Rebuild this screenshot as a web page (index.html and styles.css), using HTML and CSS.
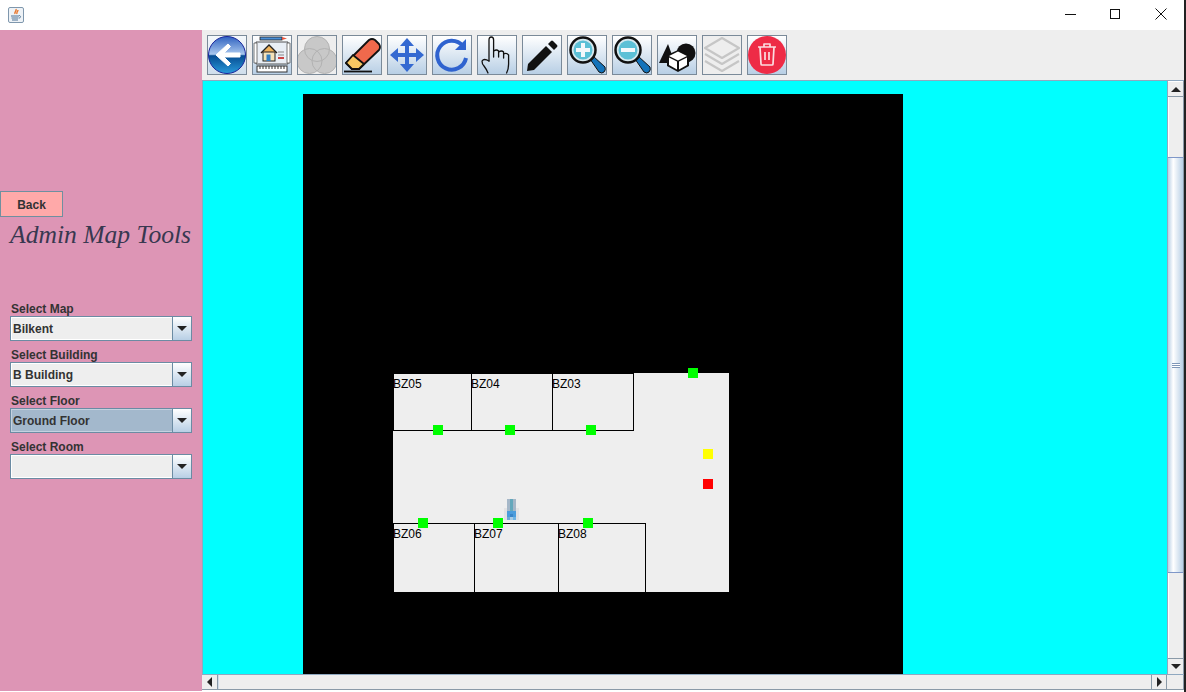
FILE: index.html
```html
<!DOCTYPE html>
<html lang="en">
<head>
<meta charset="utf-8">
<title>Admin Map Tools</title>
<link rel="stylesheet" href="styles.css">
</head>
<body>
<div class="window">
  <header class="titlebar">
    <svg class="app-icon" width="16" height="16" viewBox="0 0 16 16">
      <rect x="0.5" y="0.5" width="15" height="15" rx="1.5" fill="#eef2f6" stroke="#7f97ad"/>
      <path d="M8 2c1 2-2 3-1 5M10 3c0 2-2 2-1 4" fill="none" stroke="#e8772e" stroke-width="1.4"/>
      <path d="M3 9h8M3.5 11h7M4 13h6" stroke="#4f7396" stroke-width="1"/>
      <path d="M11 8.500c2 0 2 2.500 0 2.500" fill="none" stroke="#4f7396"/>
    </svg>
    <div class="winctl">
      <svg width="12" height="12" viewBox="0 0 12 12"><path d="M0 6.500h11" stroke="#111"/></svg>
      <svg width="12" height="12" viewBox="0 0 12 12"><rect x="1.500" y="1.500" width="9" height="9" fill="none" stroke="#111"/></svg>
      <svg width="12" height="12" viewBox="0 0 12 12"><path d="M.5.500l11 11M11.500.500l-11 11" stroke="#111"/></svg>
    </div>
  </header>
  <div class="body">
    <aside class="sidebar">
      <button class="back">Back</button>
      <h1 class="heading">Admin Map Tools</h1>
      <div class="field">
        <label class="label">Select Map</label>
        <div class="combo"><span class="value">Bilkent</span><span class="arrow"></span></div>
      </div>
      <div class="field">
        <label class="label">Select Building</label>
        <div class="combo"><span class="value">B Building</span><span class="arrow"></span></div>
      </div>
      <div class="field">
        <label class="label">Select Floor</label>
        <div class="combo focus"><span class="value">Ground Floor</span><span class="arrow"></span></div>
      </div>
      <div class="field">
        <label class="label">Select Room</label>
        <div class="combo"><span class="value"></span><span class="arrow"></span></div>
      </div>
    </aside>
    <main class="main">
      <nav class="toolbar">
        <div class="tool plain">
          <svg viewBox="0 0 38 38" width="38" height="38">
            <defs>
              <linearGradient id="gb" x1="0" y1="0" x2="0" y2="1">
                <stop offset="0" stop-color="#2f62c0"/><stop offset=".48" stop-color="#a9c7ee"/>
                <stop offset=".52" stop-color="#064c92"/><stop offset="1" stop-color="#2a9adb"/>
              </linearGradient>
            </defs>
            <circle cx="19" cy="19" r="18.500" fill="url(#gb)" stroke="#16229a"/>
            <path d="M20 8 8 19l12 11 2.500-2.500-6.500-6.500h16v-4H16l6.500-6.500z" fill="#fff" stroke="#fff" stroke-linejoin="round"/>
          </svg>
        </div>
        <div class="tool">
          <svg viewBox="0 0 38 38" width="38" height="38">
            <rect x="7" y="1" width="22" height="3" fill="#4a90d9" stroke="#222" stroke-width=".8"/>
            <path d="M29 1l5 1.500-5 1.500z" fill="#e8553f"/>
            <path d="M3 6h32v22H3z" fill="#e9eff6" stroke="#555"/>
            <path d="M1 7h3v20H1zM34 7h3v20h-3z" fill="#fff" stroke="#555" stroke-width=".8"/>
            <path d="M8 17l8-8 8 8" fill="#f1b45c" stroke="#222" stroke-width="1.300"/>
            <rect x="10" y="16" width="12" height="9" fill="#f6e2b8" stroke="#222"/>
            <rect x="13.500" y="18.500" width="4" height="6.500" fill="#2f7fc4"/>
            <path d="M25 16h6M25 19h6" stroke="#888" stroke-width="1.200"/>
            <path d="M25 22h6" stroke="#c44" stroke-width="2"/>
            <rect x="4" y="30" width="30" height="6" fill="#fff" stroke="#333"/>
            <path d="M7 30v3M10 30v3M13 30v3M16 30v3M19 30v3M22 30v3M25 30v3M28 30v3M31 30v3" stroke="#333"/>
          </svg>
        </div>
        <div class="tool off">
          <svg viewBox="0 0 38 38" width="38" height="38">
            <g fill="#c8c8c8">
              <circle cx="19" cy="13" r="12.500"/>
              <circle cx="11.500" cy="25" r="12.500"/>
              <circle cx="26.500" cy="25" r="12.500"/>
            </g>
            <g fill="none" stroke="#b2b2b2">
              <circle cx="19" cy="13" r="12.500"/>
              <circle cx="11.500" cy="25" r="12.500"/>
              <circle cx="26.500" cy="25" r="12.500"/>
            </g>
          </svg>
        </div>
        <div class="tool">
          <svg viewBox="0 0 38 38" width="38" height="38">
            <path d="M3 27 26 4q3-2 6 0l4 4q2 3 0 6L16 33H9z" fill="#f0694c" stroke="#111" stroke-width="1.800" stroke-linejoin="round"/>
            <path d="M3 27l7-8 11 9-5 5H9z" fill="#f8c862" stroke="#111" stroke-width="1.800" stroke-linejoin="round"/>
            <path d="M1 35.500h28" stroke="#111" stroke-width="1.800"/>
          </svg>
        </div>
        <div class="tool">
          <svg viewBox="0 0 38 38" width="38" height="38">
            <path d="M19 2l7 8h-5v7h7v-5l8 7-8 7v-5h-7v7h5l-7 8-7-8h5v-7h-7v5l-8-7 8-7v5h7v-7h-5z" fill="#3469d1"/>
          </svg>
        </div>
        <div class="tool">
          <svg viewBox="0 0 38 38" width="38" height="38">
            <path d="M30 10A14.500 14.500 0 1 0 33 22" fill="none" stroke="#2f63cf" stroke-width="4"/>
            <path d="M33 3v11H22z" fill="#2f63cf"/>
          </svg>
        </div>
        <div class="tool">
          <svg viewBox="0 0 38 38" width="38" height="38">
            <g fill="none" stroke="#111" stroke-width="1.300" stroke-linejoin="round" stroke-linecap="round">
              <path d="M11 25V4q0-3 2.300-3t2.300 3v17"/>
              <path d="M15.600 15q3-2 5 0v6"/>
              <path d="M20.600 16q3-2 5 0v6"/>
              <path d="M25.600 18q3-1.500 5 1v9q0 5-2 9"/>
              <path d="M10 37q-1-3-4-7-2-2-2-5 2-3 7 0"/>
            </g>
          </svg>
        </div>
        <div class="tool">
          <svg viewBox="0 0 38 38" width="38" height="38">
            <path d="M5 28 23 10l6 6-18 18-7 1z" fill="#111"/>
            <path d="M25 8l3-3q1-1 2 0l4 4q1 1 0 2l-3 3z" fill="#111"/>
          </svg>
        </div>
        <div class="tool">
          <svg viewBox="0 0 38 38" width="38" height="38">
            <path d="M22 23l3-3 12 11q1 3-1 5t-5 0z" fill="#1473ba" stroke="#111"/>
            <circle cx="15" cy="14" r="12.500" fill="#d6e8ee" stroke="#111" stroke-width="2.500"/>
            <circle cx="15" cy="14" r="9.500" fill="#5cc0d6"/>
            <path d="M13 7h4v5h5v4h-5v5h-4v-5H8v-4h5z" fill="#f4f8fb"/>
          </svg>
        </div>
        <div class="tool">
          <svg viewBox="0 0 38 38" width="38" height="38">
            <path d="M22 23l3-3 12 11q1 3-1 5t-5 0z" fill="#1473ba" stroke="#111"/>
            <circle cx="15" cy="14" r="12.500" fill="#d6e8ee" stroke="#111" stroke-width="2.500"/>
            <circle cx="15" cy="14" r="9.500" fill="#5cc0d6"/>
            <rect x="8" y="12" width="14" height="4" fill="#f4f8fb"/>
          </svg>
        </div>
        <div class="tool">
          <svg viewBox="0 0 38 38" width="38" height="38">
            <path d="M10 8 1 27h16z" fill="#111"/>
            <circle cx="28" cy="17" r="9.500" fill="#111"/>
            <path d="M9 19l11-5 11 5v11l-11 6-11-6z" fill="#111"/>
            <path d="M11 20l9-4.500 9 4.500-9 4.500zM11 21.500l8 4v8l-8-4.500zM29 21.500l-8 4v8l8-4.500z" fill="#fff"/>
          </svg>
        </div>
        <div class="tool off">
          <svg viewBox="0 0 38 38" width="38" height="38">
            <g fill="none" stroke="#c6c6c6" stroke-width="2.200" stroke-linejoin="round">
              <path d="M19 2 36 12 19 22 2 12z"/>
              <path d="M2 18l17 10 17-10"/>
              <path d="M2 25l17 10 17-10"/>
            </g>
          </svg>
        </div>
        <div class="tool">
          <svg viewBox="0 0 38 38" width="38" height="38">
            <circle cx="19" cy="19" r="19" fill="#ee2b46"/>
            <g fill="none" stroke="#fbdde1" stroke-width="1.700" stroke-linejoin="round">
              <path d="M10 11h18M16 11V8h6v3"/>
              <path d="M12 11l1 17q0 1 1 1h10q1 0 1-1l1-17"/>
              <path d="M17 16v8M21 16v8"/>
            </g>
          </svg>
        </div>
      </nav>
      <section class="scrollpane">
        <div class="viewport">
          <div class="canvas">
            <svg class="map" width="600" height="580" viewBox="303 94 600 580">
              <g class="floor">
                <rect x="394" y="374" width="240" height="57"/>
                <rect x="634" y="373" width="95" height="219"/>
                <rect x="393" y="431" width="241" height="93"/>
                <rect x="394" y="524" width="240" height="68"/>
              </g>
              <g class="walls">
                <path d="M393 430.500H634M471.500 374V430M552.500 374V430M633.500 374V431"/>
                <path d="M393 523.500H646M474.500 524V592M558.500 524V592M645.500 524V592"/>
              </g>
              <g class="rooms">
                <text x="393" y="388">BZ05</text>
                <text x="471" y="388">BZ04</text>
                <text x="552" y="388">BZ03</text>
                <text x="393" y="538">BZ06</text>
                <text x="474" y="538">BZ07</text>
                <text x="558" y="538">BZ08</text>
              </g>
              <g class="person">
                <rect x="504" y="508" width="15" height="12" fill="#e2e2e4"/>
                <rect x="507" y="499" width="3" height="12" fill="#a5b7c8"/>
                <rect x="510" y="499" width="3" height="12" fill="#64a8bc"/>
                <rect x="513" y="499" width="3" height="12" fill="#a5b7c8"/>
                <rect x="507" y="511" width="9" height="6" fill="#4b9cdc"/>
                <rect x="510" y="514" width="3" height="3" fill="#3a85c8"/>
                <rect x="507" y="517" width="3" height="3" fill="#6fa9d6"/>
                <rect x="510" y="517" width="3" height="3" fill="#a8cbe4"/>
                <rect x="513" y="517" width="3" height="3" fill="#6fb4e4"/>
              </g>
              <g class="pins-green">
                <rect x="433" y="425" width="10" height="10"/>
                <rect x="505" y="425" width="10" height="10"/>
                <rect x="586" y="425" width="10" height="10"/>
                <rect x="688" y="368" width="10" height="10"/>
                <rect x="418" y="518" width="10" height="10"/>
                <rect x="493" y="518" width="10" height="10"/>
                <rect x="583" y="518" width="10" height="10"/>
              </g>
              <rect class="pin-yellow" x="703" y="449" width="10" height="10"/>
              <rect class="pin-red" x="703" y="479" width="10" height="10"/>
            </svg>
          </div>
          <div class="vbar">
            <div class="sbtn"><span class="tri up"></span></div>
            <div class="track t1"></div>
            <div class="thumb"><span class="grip"></span></div>
            <div class="track t2"></div>
            <div class="sbtn btm"><span class="tri down"></span></div>
          </div>
        </div>
        <div class="hbar">
          <div class="sbtn h"><span class="tri left"></span></div>
          <div class="htrack"></div>
          <div class="sbtn h r"><span class="tri right"></span></div>
          <div class="corner"></div>
        </div>
      </section>
    </main>
  </div>
</div>
</body>
</html>
```

FILE: styles.css
```css
* { box-sizing: border-box; }
html, body { margin: 0; padding: 0; height: 100%; overflow: hidden; background: #fff; }
.window {
  width: 1186px; height: 692px; display: flex; flex-direction: column;
  border-right: 2px solid #222; background: #fff;
  font-family: "Liberation Sans", Arial, sans-serif;
}
.titlebar { height: 30px; flex: none; display: flex; align-items: center; justify-content: space-between; background: #fff; padding-left: 8px; }
.app-icon { margin-top: -1px; }
.winctl { display: flex; gap: 33px; margin-right: 17px; margin-top: -2px; }
.winctl svg:nth-child(2) { transform: translateX(-1px); }
.body { height: 661px; flex: none; display: flex; align-items: flex-start; }
.sidebar { width: 202px; height: 661px; flex: none; background: #dd95b5; padding-top: 161px; color: #333; }
.back {
  display: block; width: 63px; height: 26px; padding: 1px 0 0; margin: 0;
  background: #ffa9a9; border: 1px solid #6f909f; color: #333;
  font: bold 12px "Liberation Sans", Arial, sans-serif;
}
.heading {
  margin: 2px 0 52px 10px; height: 31px; width: 190px; white-space: nowrap;
  font: italic normal 25.6px/31px "Liberation Serif", "Times New Roman", serif;
  color: #383850;
}
.field { margin: 0 0 0 10px; width: 182px; height: 46px; }
.label { display: block; height: 14px; line-height: 14px; font-size: 12px; font-weight: bold; color: #333; padding-left: 1px; }
.combo { display: flex; height: 25px; border: 1px solid #6b8ba3; background: #eee; }
.value { flex: 1; padding-left: 1px; line-height: 23px; font-size: 12px; font-weight: bold; color: #333; border: 1px solid #fff; border-right: none; }
.focus .value { background: #a3b8cc; border-color: #c4d2e0; }
.arrow {
  width: 19px; flex: none; border-left: 1px solid #6b8ba3;
  background: linear-gradient(#fff, #b8cfe5); position: relative;
}
.arrow::after {
  content: ""; position: absolute; left: 4px; top: 9px;
  border-left: 5px solid transparent; border-right: 5px solid transparent; border-top: 5px solid #222;
}
.main { flex: 1; min-width: 0; height: 660px; display: flex; flex-direction: column; }
.toolbar { height: 50px; flex: none; background: #eee; display: flex; gap: 5px; padding: 5px 0 0 5px; }
.tool {
  width: 40px; height: 40px; flex: none; border: 1px solid #7a8a99;
  background: linear-gradient(#fff, #b8cfe5);
  display: flex; align-items: center; justify-content: center;
}
.tool svg { display: block; }
.tool.off { background: #eee; }
.tool.plain { background: linear-gradient(#f4f8fb, #cfdeec); }
.scrollpane { flex: 1; min-height: 0; border-top: 1px solid #8fa8c0; display: flex; flex-direction: column; }
.viewport { height: 593px; flex: none; display: flex; }
.canvas { flex: 1; background: #00ffff; border-left: 1px solid #8fa8c0; padding: 13px 0 0 100px; overflow: hidden; }
.map { display: block; background: #000; }
.floor { fill: #eee; }
.walls path { stroke: #000; stroke-width: 1; fill: none; }
.rooms text { font: 12px "Liberation Sans", Arial, sans-serif; fill: #000; }
.pins-green { fill: #00ff00; }
.pin-yellow { fill: #ffff00; }
.pin-red { fill: #ff0000; }
.vbar { width: 17px; flex: none; display: flex; flex-direction: column; border-left: 1px solid #8fa8c0; border-right: 1px solid #8a9aa8; background: #eee; }
.sbtn { height: 16px; flex: none; background: #eee; border-bottom: 1px solid #8a9aa8; border-top: 1px solid #fff; position: relative; display: flex; align-items: center; justify-content: center; }
.sbtn.btm { border-top: 1px solid #8a9aa8; border-bottom: 0; }
.track { background: #eee; border-left: 1px solid #fff; }
.t1 { height: 60px; flex: none; }
.t2 { flex: 1; }
.thumb {
  height: 416px; flex: none; position: relative;
  background: linear-gradient(90deg, #b8cfe5, #fff 35%, #b8cfe5);
  border-top: 1px solid #7f97c8; border-bottom: 1px solid #7f97c8;
}
.grip { position: absolute; left: 4px; right: 3px; top: 205px; height: 5px; background: repeating-linear-gradient(#7f97b8 0 1px, #fff 1px 2px); }
.tri { display: block; width: 0; height: 0; }
.tri.up { border-left: 5px solid transparent; border-right: 5px solid transparent; border-bottom: 5px solid #222; }
.tri.down { border-left: 5px solid transparent; border-right: 5px solid transparent; border-top: 5px solid #222; }
.tri.left { border-top: 5px solid transparent; border-bottom: 5px solid transparent; border-right: 5px solid #222; }
.tri.right { border-top: 5px solid transparent; border-bottom: 5px solid transparent; border-left: 5px solid #222; }
.hbar { height: 16px; flex: none; display: flex; border-top: 1px solid #8fa8c0; border-bottom: 1px solid #8a9aa8; background: #eee; }
.sbtn.h { width: 16px; height: auto; border: 0; border-right: 1px solid #8a9aa8; }
.sbtn.h.r { width: 16px; border-right: 1px solid #8a9aa8; border-left: 1px solid #8a9aa8; }
.htrack { flex: 1; border-left: 1px solid #cfdcea; }
.corner { width: 17px; flex: none; border-right: 1px solid #8a9aa8; background: #eee; }
```
